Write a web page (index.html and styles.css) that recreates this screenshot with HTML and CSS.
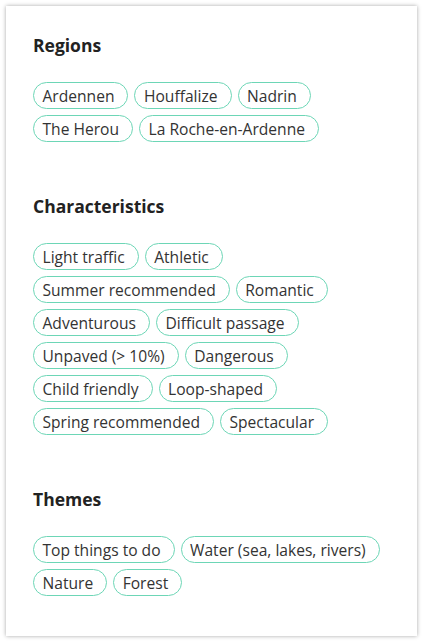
FILE: index.html
```html
<!DOCTYPE html>
<html lang="en">
<head>
  <meta charset="UTF-8" />
  <meta name="viewport" content="width=device-width, initial-scale=1.0"/>
  <title>Route details</title>
  <link rel="stylesheet" href="styles.css">
</head>
<body>
  <div class="card">
    <section class="group">
      <h2>Regions</h2>
      <div class="tags">
        <span class="tag">Ardennen</span>
        <span class="tag">Houffalize</span>
        <span class="tag">Nadrin</span>
        <span class="tag">The Herou</span>
        <span class="tag">La Roche-en-Ardenne</span>
      </div>
    </section>

    <section class="group">
      <h2>Characteristics</h2>
      <div class="tags">
        <span class="tag">Light traffic</span>
        <span class="tag">Athletic</span>
        <span class="tag">Summer recommended</span>
        <span class="tag">Romantic</span>
        <span class="tag">Adventurous</span>
        <span class="tag">Difficult passage</span>
        <span class="tag">Unpaved (&gt; 10%)</span>
        <span class="tag">Dangerous</span>
        <span class="tag">Child friendly</span>
        <span class="tag">Loop-shaped</span>
        <span class="tag">Spring recommended</span>
        <span class="tag">Spectacular</span>
      </div>
    </section>

    <section class="group">
      <h2>Themes</h2>
      <div class="tags">
        <span class="tag">Top things to do</span>
        <span class="tag">Water (sea, lakes, rivers)</span>
        <span class="tag">Nature</span>
        <span class="tag">Forest</span>
      </div>
    </section>
  </div>
</body>
</html>
```

FILE: styles.css
```css
body {
  margin: 0;
  padding: 6px 8px 7px 6px;
  background: #fff;
  font-family: "Open Sans", "Liberation Sans", sans-serif;
  color: #333;
}

.card {
  background: #fff;
  box-shadow: 0 0 4px rgba(0, 0, 0, 0.35);
  padding: 27px 20px 1px 27px;
  height: 630px;
  box-sizing: border-box;
}

.group {
  margin-bottom: 52px;
}

.group h2 {
  margin: 0 0 25px;
  font-size: 17.5px;
  line-height: 24px;
  font-weight: 700;
  color: #222;
}

.tags {
  display: flex;
  flex-wrap: wrap;
  gap: 6px;
}

.tag {
  display: inline-flex;
  align-items: center;
  height: 27px;
  box-sizing: border-box;
  padding: 0 13px 0 8.5px;
  border: 1.5px solid #6dd6b6;
  border-radius: 14px;
  font-size: 15.6px;
  color: #333;
  white-space: nowrap;
}
```
